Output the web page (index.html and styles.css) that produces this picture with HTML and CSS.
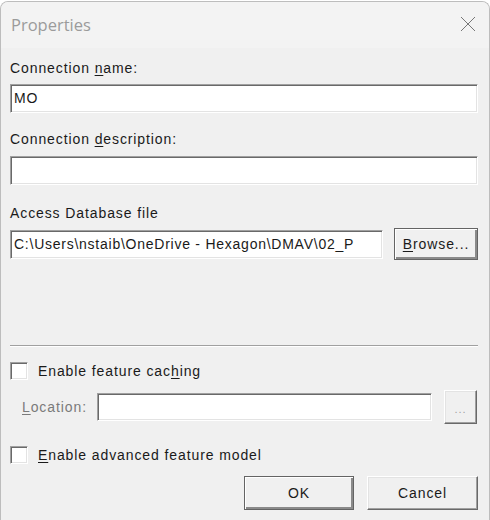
FILE: index.html
```html
<!DOCTYPE html>
<html>
<head>
<meta charset="utf-8">
<link rel="stylesheet" href="styles.css">
</head>
<body>
<div class="window">
  <div class="titlebar">
    <span class="title">Properties</span>
    <svg class="close" width="16" height="16" viewBox="0 0 16 16"><path d="M1 1 L15 15 M15 1 L1 15" stroke="#777777" stroke-width="1" fill="none"/></svg>
  </div>
  <div class="content">
    <div class="label l1">Connection <u>n</u>ame:</div>
    <div class="field">MO</div>
    <div class="label l2">Connection <u>d</u>escription:</div>
    <div class="field"></div>
    <div class="label l3">Access Database file</div>
    <div class="filerow">
      <div class="field file">C:\Users\nstaib\OneDrive - Hexagon\DMAV\02_P</div>
      <div class="btn default browse"><u>B</u>rowse...</div>
    </div>
    <div class="sep"></div>
    <div class="check c1"><span class="box"></span><span>Enable feature cac<u>h</u>ing</span></div>
    <div class="locrow">
      <span class="loclabel"><u>L</u>ocation:</span>
      <div class="field loc"></div>
      <div class="btn dots">...</div>
    </div>
    <div class="check c2"><span class="box"></span><span><u>E</u>nable advanced feature model</span></div>
    <div class="buttons">
      <div class="btn default ok">OK</div>
      <div class="btn cancel">Cancel</div>
    </div>
  </div>
</div>
</body>
</html>
```
FILE: styles.css
```css
html, body {
  margin: 0;
  padding: 0;
  background: #ffffff;
}
.window {
  margin-top: 1px;
  width: 490px;
  height: 519px;
  box-sizing: border-box;
  border: 1px solid #bdbdbd;
  border-bottom: none;
  border-radius: 8px 8px 0 0;
  overflow: hidden;
  background: #f0f0f0;
  display: flex;
  flex-direction: column;
}
.titlebar {
  height: 46px;
  background: #f3f3f3;
  display: flex;
  align-items: center;
  justify-content: space-between;
  padding: 0 13px 0 10px;
  flex-shrink: 0;
}
.title {
  font-family: "Open Sans", "Noto Sans", sans-serif;
  font-size: 16.5px;
  color: #9b9b9b;
  margin-top: -1px;
}
.close {
  margin-top: -2px;
}
.content {
  padding: 0 11px 0 9px;
  display: flex;
  flex-direction: column;
  font-family: "Liberation Sans", Arial, sans-serif;
  font-size: 14px;
  letter-spacing: 0.9px;
  color: #1a1a1a;
}
.label {
  line-height: 16px;
  height: 16px;
}
.l1 { margin-top: 12px; margin-bottom: 8px; }
.l2 { margin-top: 18px; margin-bottom: 9px; }
.l3 { margin-top: 20px; margin-bottom: 7px; }
u { text-decoration: underline; text-underline-offset: 2px; }
.field {
  height: 29px;
  box-sizing: border-box;
  background: #fff;
  border-style: solid;
  border-width: 1px;
  border-color: #a0a0a0 #ffffff #ffffff #a0a0a0;
  box-shadow: inset 1px 1px 0 #696969, inset -1px -1px 0 #e3e3e3;
  padding: 0 3px;
  line-height: 27px;
  white-space: nowrap;
  overflow: hidden;
}
.filerow {
  display: flex;
  align-items: center;
  gap: 11px;
}
.field.file {
  flex: 1;
  min-width: 0;
  letter-spacing: 0.75px;
}
.btn {
  box-sizing: border-box;
  background: #f0f0f0;
  border-style: solid;
  border-width: 1px;
  border-color: #ffffff #696969 #696969 #ffffff;
  box-shadow: inset -1px -1px 0 #a0a0a0, inset 1px 1px 0 #e3e3e3;
  display: flex;
  align-items: center;
  justify-content: center;
  white-space: nowrap;
}
.btn.default {
  border-color: #646464;
  box-shadow: inset 1px 1px 0 #ffffff, inset -2px -2px 0 #8a8a8a, inset -1px -1px 0 #696969;
}
.browse {
  width: 84px;
  height: 32px;
  flex-shrink: 0;
}
.sep {
  margin-top: 85px;
  height: 0;
  border-top: 1px solid #a0a0a0;
  border-bottom: 1px solid #ffffff;
}
.check {
  display: flex;
  align-items: center;
  gap: 10px;
  height: 18px;
}
.c1 { margin-top: 15px; }
.c2 { margin-top: 22px; }
.box {
  width: 18px;
  height: 18px;
  box-sizing: border-box;
  background: #fff;
  border-style: solid;
  border-width: 1px;
  border-color: #a0a0a0 #ffffff #ffffff #a0a0a0;
  box-shadow: inset 1px 1px 0 #696969, inset -1px -1px 0 #e3e3e3;
  flex-shrink: 0;
}
.locrow {
  display: flex;
  align-items: center;
  margin-top: 10px;
  height: 34px;
}
.loclabel {
  color: #7a7a7a;
  margin-left: 12px;
  width: 75px;
}
.field.loc {
  width: 335px;
  height: 28px;
}
.dots {
  margin-left: 12px;
  width: 33px;
  height: 34px;
  color: #a0a0a0;
  font-size: 11px;
  letter-spacing: 1px;
  padding-top: 4px;
}
.buttons {
  display: flex;
  justify-content: flex-end;
  gap: 13px;
  margin-top: 12px;
}
.ok {
  width: 110px;
  height: 34px;
}
.cancel {
  width: 111px;
  height: 34px;
}
```
